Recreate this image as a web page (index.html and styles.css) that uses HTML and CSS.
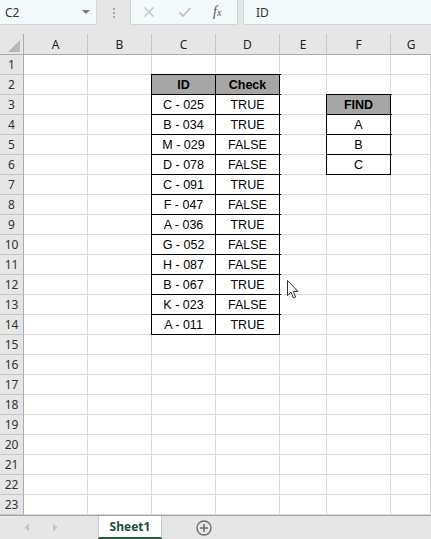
FILE: index.html
```html
<!DOCTYPE html>
<html>
<head>
<meta charset="utf-8">
<link rel="stylesheet" href="styles.css">
</head>
<body>
<div class="app">
  <div class="fbar">
    <div class="namebox"><span class="nb-text">C2</span><span class="nb-arrow"></span></div>
    <div class="grip"><i></i><i></i><i></i></div>
    <div class="fxbox">
      <svg class="ico" width="12" height="12" viewBox="0 0 12 12"><path d="M1.5 1.5 L10.5 10.5 M10.5 1.5 L1.5 10.5" stroke="#c2c2c2" stroke-width="1.4" fill="none"/></svg>
      <svg class="ico" width="14" height="12" viewBox="0 0 14 12"><path d="M1.5 6.5 L5 10 L12.5 2" stroke="#c2c2c2" stroke-width="1.8" fill="none"/></svg>
      <span class="fx">f<small>x</small></span>
    </div>
    <div class="finput">ID</div>
  </div>

  <div class="sheet">
    <div class="corner"><span class="tri"></span></div>
    <div class="ch">A</div><div class="ch">B</div><div class="ch">C</div><div class="ch">D</div><div class="ch">E</div><div class="ch">F</div><div class="ch last">G</div>

    <div class="rh">1</div><div class="c"></div><div class="c"></div><div class="c"></div><div class="c"></div><div class="c"></div><div class="c"></div><div class="c"></div>
    <div class="rh">2</div><div class="c"></div><div class="c"></div><div class="c t th">ID</div><div class="c t th">Check</div><div class="c"></div><div class="c"></div><div class="c"></div>
    <div class="rh">3</div><div class="c"></div><div class="c"></div><div class="c t">C - 025</div><div class="c t">TRUE</div><div class="c"></div><div class="c t th">FIND</div><div class="c"></div>
    <div class="rh">4</div><div class="c"></div><div class="c"></div><div class="c t">B - 034</div><div class="c t">TRUE</div><div class="c"></div><div class="c t">A</div><div class="c"></div>
    <div class="rh">5</div><div class="c"></div><div class="c"></div><div class="c t">M - 029</div><div class="c t">FALSE</div><div class="c"></div><div class="c t">B</div><div class="c"></div>
    <div class="rh">6</div><div class="c"></div><div class="c"></div><div class="c t">D - 078</div><div class="c t">FALSE</div><div class="c"></div><div class="c t">C</div><div class="c"></div>
    <div class="rh">7</div><div class="c"></div><div class="c"></div><div class="c t">C - 091</div><div class="c t">TRUE</div><div class="c"></div><div class="c"></div><div class="c"></div>
    <div class="rh">8</div><div class="c"></div><div class="c"></div><div class="c t">F - 047</div><div class="c t">FALSE</div><div class="c"></div><div class="c"></div><div class="c"></div>
    <div class="rh">9</div><div class="c"></div><div class="c"></div><div class="c t">A - 036</div><div class="c t">TRUE</div><div class="c"></div><div class="c"></div><div class="c"></div>
    <div class="rh">10</div><div class="c"></div><div class="c"></div><div class="c t">G - 052</div><div class="c t">FALSE</div><div class="c"></div><div class="c"></div><div class="c"></div>
    <div class="rh">11</div><div class="c"></div><div class="c"></div><div class="c t">H - 087</div><div class="c t">FALSE</div><div class="c"></div><div class="c"></div><div class="c"></div>
    <div class="rh">12</div><div class="c"></div><div class="c"></div><div class="c t">B - 067</div><div class="c t">TRUE</div><div class="c"></div><div class="c"></div><div class="c"></div>
    <div class="rh">13</div><div class="c"></div><div class="c"></div><div class="c t">K - 023</div><div class="c t">FALSE</div><div class="c"></div><div class="c"></div><div class="c"></div>
    <div class="rh">14</div><div class="c"></div><div class="c"></div><div class="c t">A - 011</div><div class="c t">TRUE</div><div class="c"></div><div class="c"></div><div class="c"></div>
    <div class="rh">15</div><div class="c"></div><div class="c"></div><div class="c"></div><div class="c"></div><div class="c"></div><div class="c"></div><div class="c"></div>
    <div class="rh">16</div><div class="c"></div><div class="c"></div><div class="c"></div><div class="c"></div><div class="c"></div><div class="c"></div><div class="c"></div>
    <div class="rh">17</div><div class="c"></div><div class="c"></div><div class="c"></div><div class="c"></div><div class="c"></div><div class="c"></div><div class="c"></div>
    <div class="rh">18</div><div class="c"></div><div class="c"></div><div class="c"></div><div class="c"></div><div class="c"></div><div class="c"></div><div class="c"></div>
    <div class="rh">19</div><div class="c"></div><div class="c"></div><div class="c"></div><div class="c"></div><div class="c"></div><div class="c"></div><div class="c"></div>
    <div class="rh">20</div><div class="c"></div><div class="c"></div><div class="c"></div><div class="c"></div><div class="c"></div><div class="c"></div><div class="c"></div>
    <div class="rh">21</div><div class="c"></div><div class="c"></div><div class="c"></div><div class="c"></div><div class="c"></div><div class="c"></div><div class="c"></div>
    <div class="rh">22</div><div class="c"></div><div class="c"></div><div class="c"></div><div class="c"></div><div class="c"></div><div class="c"></div><div class="c"></div>
    <div class="rh">23</div><div class="c"></div><div class="c"></div><div class="c"></div><div class="c"></div><div class="c"></div><div class="c"></div><div class="c"></div>
  </div>

  <div class="tabbar">
    <div class="navs">
      <svg width="6" height="9" viewBox="0 0 6 9"><path d="M5 0.5 L0.5 4.5 L5 8.5 Z" fill="#c4c4c4"/></svg>
      <svg width="6" height="9" viewBox="0 0 6 9"><path d="M1 0.5 L5.5 4.5 L1 8.5 Z" fill="#c4c4c4"/></svg>
    </div>
    <div class="tab">Sheet1</div>
    <svg class="addsheet" width="16" height="16" viewBox="0 0 16 16"><circle cx="8" cy="8" r="7" fill="none" stroke="#6a6a6a" stroke-width="1.3"/><path d="M8 4 V12 M4 8 H12" stroke="#6a6a6a" stroke-width="1.5"/></svg>
  </div>

  <svg class="cursor" width="13" height="19" viewBox="0 0 13 19"><path d="M0.5 0.5 L0.5 15.5 L4 12.2 L6.4 17.8 L8.6 16.9 L6.3 11.4 L11 11.4 Z" fill="#fff" stroke="#2c2c3a" stroke-width="1" stroke-linejoin="round"/></svg>
</div>
</body>
</html>
```

FILE: styles.css
```css
* { box-sizing: border-box; }
html, body { margin: 0; padding: 0; background: #fff; }
body { width: 431px; height: 539px; overflow: hidden; }

.app {
  position: relative;
  width: 431px;
  height: 539px;
  display: flex;
  flex-direction: column;
  background: #e6e6e6;
  font-family: "Noto Sans", "Liberation Sans", sans-serif;
}

/* formula bar */
.fbar {
  height: 34px;
  flex: none;
  display: flex;
  align-items: flex-start;
  background: #e6e6e6;
}
.namebox {
  width: 97px;
  height: 25px;
  background: #f3fafc;
  border-right: 1px solid #cfd6d8;
  border-bottom: 1px solid #cfd6d8;
  display: flex;
  align-items: center;
  justify-content: space-between;
  padding: 0 6px 0 5px;
  font-size: 12px;
  color: #333;
}
.nb-arrow {
  width: 0; height: 0;
  border-left: 4px solid transparent;
  border-right: 4px solid transparent;
  border-top: 4px solid #7a7a7a;
}
.grip {
  width: 33px;
  height: 25px;
  display: flex;
  flex-direction: column;
  align-items: center;
  justify-content: center;
  gap: 2px;
}
.grip i {
  display: block;
  width: 2px; height: 2px;
  background: #a8a8a8;
}
.fxbox {
  width: 108px;
  height: 25px;
  background: #f3fafc;
  border: 1px solid #cfd6d8;
  border-top: none;
  display: flex;
  align-items: center;
  padding-left: 12px;
  gap: 23px;
}
.fx {
  font-family: "Liberation Serif", serif;
  font-style: italic;
  font-size: 14px;
  color: #555;
  margin-left: -2px;
}
.fx small { font-size: 10px; }
.finput {
  margin-left: 5px;
  flex: 1;
  height: 25px;
  background: #f3fafc;
  border-left: 1px solid #cfd6d8;
  border-bottom: 1px solid #cfd6d8;
  padding-left: 12px;
  display: flex;
  align-items: center;
  font-size: 12px;
  color: #333;
}

/* grid */
.sheet {
  flex: none;
  display: grid;
  grid-template-columns: 24px 64px 64px 64px 64px 47px 64px 1fr;
  grid-template-rows: 21px repeat(23, 20px);
  background: #fff;
}
.corner {
  background: #e6e6e6;
  border-right: 1px solid #ababab;
  border-bottom: 1px solid #ababab;
  position: relative;
}
.tri {
  position: absolute;
  right: 3px;
  bottom: 2px;
  width: 0; height: 0;
  border-left: 12px solid transparent;
  border-bottom: 12px solid #b8b8b8;
}
.ch {
  background: #e6e6e6;
  border-right: 1px solid #c6c6c6;
  border-bottom: 1px solid #ababab;
  display: flex;
  align-items: center;
  justify-content: center;
  font-size: 12px;
  color: #222;
}
.ch.last { border-right: none; }
.rh {
  background: #e6e6e6;
  border-right: 1px solid #ababab;
  border-bottom: 1px solid #c6c6c6;
  display: flex;
  align-items: center;
  justify-content: center;
  font-size: 12px;
  color: #333;
}
.c {
  background: #fff;
  border-right: 1px solid #d9d9d9;
  border-bottom: 1px solid #d9d9d9;
  display: flex;
  align-items: center;
  justify-content: center;
  padding-top: 1px;
  font-family: "Liberation Sans", Arial, sans-serif;
  font-size: 12.5px;
  color: #000;
}
.c.t {
  border-right-color: #000;
  border-bottom-color: #000;
  box-shadow: 0 0 0 1px #000;
}
.c.th {
  background: #a6a6a6;
  font-weight: bold;
}

/* sheet tabs */
.tabbar {
  flex: 1;
  display: flex;
  align-items: stretch;
  background: #e6e6e6;
  border-top: 1px solid #a0a0a0;
}
.navs {
  width: 98px;
  display: flex;
  align-items: center;
  padding-left: 24px;
  gap: 22px;
}
.tab {
  width: 64px;
  background: #fff;
  border-left: 1px solid #c8c8c8;
  border-right: 1px solid #c8c8c8;
  border-bottom: 2px solid #2a5a3e;
  display: flex;
  align-items: center;
  justify-content: center;
  font-size: 12px;
  font-weight: bold;
  color: #1f4d34;
}
.addsheet {
  align-self: center;
  margin-left: 34px;
}

.cursor {
  position: absolute;
  left: 287px;
  top: 280px;
}
```
